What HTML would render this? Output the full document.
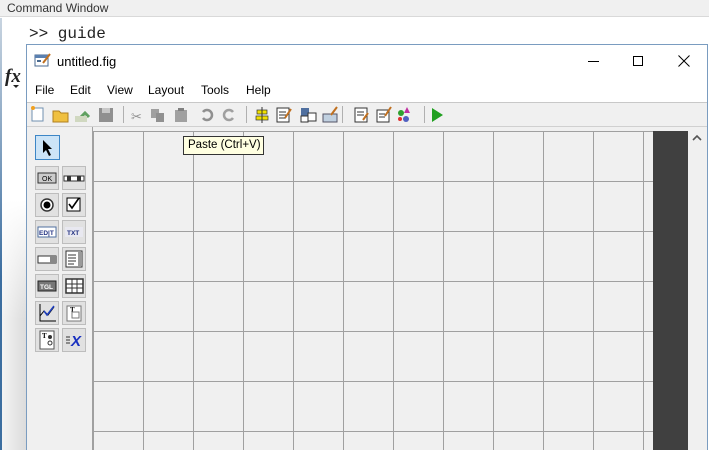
<!DOCTYPE html>
<html><head><style>
*{margin:0;padding:0;box-sizing:border-box}
body{width:709px;height:450px;overflow:hidden;background:#fff;position:relative;font-family:"Liberation Sans",sans-serif}
.a{position:absolute}
.hdr{left:0;top:0;width:709px;height:17px;background:#f0f0f0;border-bottom:1px solid #d9d9d9;font-size:12px;color:#333;padding:1px 0 0 7px}
.cmd{left:29px;top:25px;font-family:"Liberation Mono",monospace;font-size:16px;color:#222}
.fx{left:5px;top:66px;font-family:"Liberation Serif",serif;font-style:italic;font-weight:bold;font-size:19px;color:#222}
.win{left:26px;top:44px;width:682px;height:406px;border:1px solid #7a9cc0;border-bottom:none;background:#fff}
.menu span{position:absolute;top:83px;font-size:12px;color:#000}
.tb{left:27px;top:102px;width:680px;height:25px;background:#f0f0f0;border-top:1px solid #c8c8c8;border-bottom:1px solid #d0d0d0}
.canvas{left:27px;top:127px;width:680px;height:323px;background:#f0f0f0}
.btn{position:absolute;width:24px;height:24px;background:#e1e1e1;border:1px solid #bdbdbd}
.grid{left:93px;top:131px;width:560px;height:319px;border-left:1px solid #a0a0a0;border-top:1px solid #a0a0a0;
background-image:linear-gradient(to right,#a0a0a0 1px,transparent 1px),linear-gradient(to bottom,#a0a0a0 1px,transparent 1px);
background-size:50px 50px;background-position:-1px -1px;background-color:#f0f0f0}
.sep{position:absolute;top:106px;width:1px;height:17px;background:#b0b0b0}
</style></head><body>
<div class="a hdr">Command Window</div>
<div class="a" style="left:0;top:18px;width:2px;height:432px;background:linear-gradient(to bottom,#c8d4e0,#3c6ea0 60%)"></div>
<div class="a" style="left:2px;top:200px;width:24px;height:250px;background:linear-gradient(to bottom,rgba(255,255,255,0),rgba(255,255,255,0) 0%),linear-gradient(to right,#f3f3f3,#dcdcdc);opacity:1"></div>
<div class="a" style="left:2px;top:200px;width:24px;height:120px;background:linear-gradient(to bottom,#fff,rgba(255,255,255,0))"></div>
<div class="a cmd">&gt;&gt; guide</div>
<div class="a fx">fx</div>
<div class="a" style="left:13px;top:85px;border-left:3px solid transparent;border-right:3px solid transparent;border-top:3px solid #222"></div>
<div class="a win"></div>
<svg class="a" style="left:34px;top:52px" width="18" height="16"><rect x="1" y="3" width="13" height="11" fill="#fff" stroke="#4a6a90"/><rect x="1" y="3" width="13" height="3" fill="#5a80b0"/><rect x="3" y="8" width="4" height="2" fill="#4a6a90"/><path d="M9 11 L16 2" stroke="#c07020" stroke-width="2"/></svg>
<div class="a" style="left:57px;top:54px;font-size:13px;color:#000">untitled.fig</div>
<div class="a" style="left:588px;top:61px;width:11px;height:1px;background:#000"></div>
<div class="a" style="left:633px;top:56px;width:10px;height:10px;border:1px solid #000"></div>
<svg class="a" style="left:678px;top:55px" width="12" height="12"><path d="M0.5 0.5L11.5 11.5M11.5 0.5L0.5 11.5" stroke="#000"/></svg>
<div class="menu"><span style="left:35px">File</span><span style="left:70px">Edit</span><span style="left:107px">View</span><span style="left:148px">Layout</span><span style="left:201px">Tools</span><span style="left:246px">Help</span></div>
<div class="a tb"></div>
<svg class="a" style="left:29px;top:105px" width="420" height="20">
<rect x="3" y="3" width="11" height="13" fill="#fff" stroke="#7090b0"/><circle cx="4" cy="3" r="2" fill="#f0a020"/>
<path d="M24 6h6l2 2h7v9h-15z" fill="#f0c040" stroke="#b08020"/>
<path d="M48 16l8-8 4 4" stroke="#60a060" stroke-width="3" fill="none"/><rect x="46" y="11" width="12" height="6" fill="#d0d8c0"/>
<rect x="70" y="3" width="14" height="14" fill="#909090"/><rect x="73" y="3" width="8" height="5" fill="#c8c8c8"/>
<text x="102" y="16" font-size="13" fill="#909090" font-family="Liberation Sans">✂</text>
<rect x="122" y="4" width="8" height="9" fill="#a0a0a0"/><rect x="127" y="8" width="8" height="9" fill="#909090"/>
<rect x="146" y="5" width="12" height="12" fill="#a0a0a0"/><rect x="149" y="3" width="6" height="3" fill="#808080"/>
<path d="M174 13a5 5 0 1 0 0-6" stroke="#909090" stroke-width="2.5" fill="none"/>
<path d="M204 13a5 5 0 1 1 0-6" stroke="#a0a0a0" stroke-width="2.5" fill="none"/>
<rect x="228" y="5" width="10" height="4" fill="#f0e000" stroke="#333" stroke-width=".7"/><rect x="227" y="11" width="12" height="4" fill="#f0e000" stroke="#333" stroke-width=".7"/><line x1="233" y1="2" x2="233" y2="18" stroke="#333"/>
<rect x="248" y="3" width="12" height="14" fill="#fff" stroke="#333"/><path d="M250 7h7M250 10h7M250 13h7" stroke="#333"/><path d="M256 13l6-9" stroke="#c07020" stroke-width="2"/>
<rect x="272" y="3" width="8" height="8" fill="#5070a0"/><rect x="279" y="8" width="8" height="8" fill="#fff" stroke="#333"/><rect x="272" y="11" width="7" height="6" fill="#fff" stroke="#333"/>
<rect x="294" y="9" width="14" height="8" fill="#c0d0e0" stroke="#556"/><path d="M302 10l6-8" stroke="#c07020" stroke-width="2"/>
<rect x="326" y="3" width="12" height="14" fill="#fff" stroke="#333"/><path d="M328 7h7M328 10h7" stroke="#333"/><path d="M334 15l5-7" stroke="#c07020" stroke-width="2"/>
<rect x="348" y="5" width="12" height="12" fill="#fff" stroke="#333"/><path d="M350 9h6M350 12h6" stroke="#333"/><path d="M356 11l6-9" stroke="#c07020" stroke-width="2"/>
<circle cx="372" cy="8" r="3" fill="#30a030"/><circle cx="377" cy="14" r="3" fill="#5060c0"/><path d="M378 2l3 6h-6z" fill="#c030a0"/><circle cx="371" cy="14" r="2" fill="#e03030"/>
<path d="M403 3l11 7-11 7z" fill="#20a020"/>
</svg>
<div class="sep" style="left:123px"></div><div class="sep" style="left:246px"></div><div class="sep" style="left:342px"></div><div class="sep" style="left:424px"></div>
<div class="a canvas"></div>
<div class="a" style="left:92px;top:127px;width:1px;height:323px;background:#a0a0a0"></div>
<div class="a grid"></div>
<div class="a" style="left:653px;top:131px;width:35px;height:319px;background:#404040"></div>
<div class="a" style="left:689px;top:127px;width:18px;height:323px;background:#f0f0f0"></div>
<svg class="a" style="left:692px;top:134px" width="10" height="8"><path d="M1 6l4-4 4 4" stroke="#555" stroke-width="1.6" fill="none"/></svg>
<div class="btn" style="left:35px;top:135px;width:25px;height:25px;background:#cce4f7;border-color:#3d86c6"></div>
<svg class="a" style="left:41px;top:139px" width="14" height="18"><path d="M2 1v13l3-3 3 6 2-1-3-6h4z" fill="#000"/></svg>
<div id="pal"></div>
<script>
var rows=[166,193,220,247,274,301,328],h='';
var ic=[['<rect x="3" y="7" width="18" height="10" fill="#ccc" stroke="#333"/><text x="7" y="15" font-size="7" font-family="Liberation Sans">OK</text>','<rect x="2" y="10" width="20" height="5" fill="#fff" stroke="#333"/><rect x="5" y="10" width="4" height="5" fill="#333"/><rect x="15" y="10" width="4" height="5" fill="#333"/>'],
['<circle cx="12" cy="12" r="6" fill="#fff" stroke="#333" stroke-width="1.5"/><circle cx="12" cy="12" r="3.5" fill="#000"/>','<rect x="5" y="5" width="13" height="13" fill="#fff" stroke="#000"/><path d="M7 11l3 4 7-10" stroke="#000" stroke-width="1.6" fill="none"/>'],
['<rect x="3" y="7" width="18" height="10" fill="#fff" stroke="#5070a0"/><text x="4" y="15" font-size="6.5" fill="#203080" font-family="Liberation Sans" font-weight="bold">ED|T</text>','<rect x="3" y="7" width="18" height="10" fill="#e8e8f0"/><text x="5" y="15" font-size="6.5" fill="#203080" font-family="Liberation Sans" font-weight="bold">TXT</text>'],
['<rect x="3" y="9" width="18" height="7" fill="#fff" stroke="#333"/><rect x="15" y="9" width="6" height="7" fill="#888"/>','<rect x="4" y="4" width="16" height="16" fill="#fff" stroke="#333"/><path d="M6 8h8M6 11h8M6 14h8M6 17h6" stroke="#333"/><rect x="16" y="5" width="3" height="14" fill="#999"/>'],
['<rect x="3" y="7" width="18" height="10" fill="#777" stroke="#222"/><text x="5" y="15" font-size="6.5" fill="#fff" font-family="Liberation Sans" font-weight="bold">TGL</text>','<rect x="4" y="5" width="17" height="14" fill="#fff" stroke="#333" stroke-width="1.5"/><path d="M4 10h17M4 14h17M10 5v14M15 5v14" stroke="#333"/>'],
['<path d="M5 3v17h16M5 15l4-5 4 4 6-8" stroke="#000" fill="none"/><path d="M9 10l3 4 7-9" stroke="#2040c0" stroke-width="1.5" fill="none"/>','<rect x="5" y="5" width="14" height="15" fill="#fff" stroke="#777"/><text x="8" y="11" font-size="7" font-family="Liberation Serif" font-weight="bold">T</text><rect x="10" y="11" width="7" height="6" fill="none" stroke="#777"/>'],
['<rect x="5" y="3" width="14" height="18" fill="#fff" stroke="#555"/><text x="7" y="10" font-size="7" font-family="Liberation Serif" font-weight="bold">T</text><circle cx="15" cy="9" r="2" fill="#333"/><circle cx="15" cy="15" r="2" fill="none" stroke="#333"/>','<path d="M4 9h4M4 12h4M4 15h4" stroke="#333"/><text x="9" y="18" font-size="15" fill="#1830c0" font-family="Liberation Sans" font-weight="bold" font-style="italic">X</text>']];
for(var r=0;r<7;r++)for(var c=0;c<2;c++){var x=c?62:35;h+='<div class="btn" style="left:'+x+'px;top:'+rows[r]+'px"></div><svg class="a" style="left:'+x+'px;top:'+rows[r]+'px" width="24" height="24">'+ic[r][c]+'</svg>';}
document.getElementById('pal').innerHTML=h;
</script>
<div class="a" style="left:183px;top:136px;width:81px;height:19px;background:#ffffe1;border:1px solid #333;font-size:11.5px;padding:2px 0 0 4px;color:#000">Paste (Ctrl+V)</div>
</body></html>
